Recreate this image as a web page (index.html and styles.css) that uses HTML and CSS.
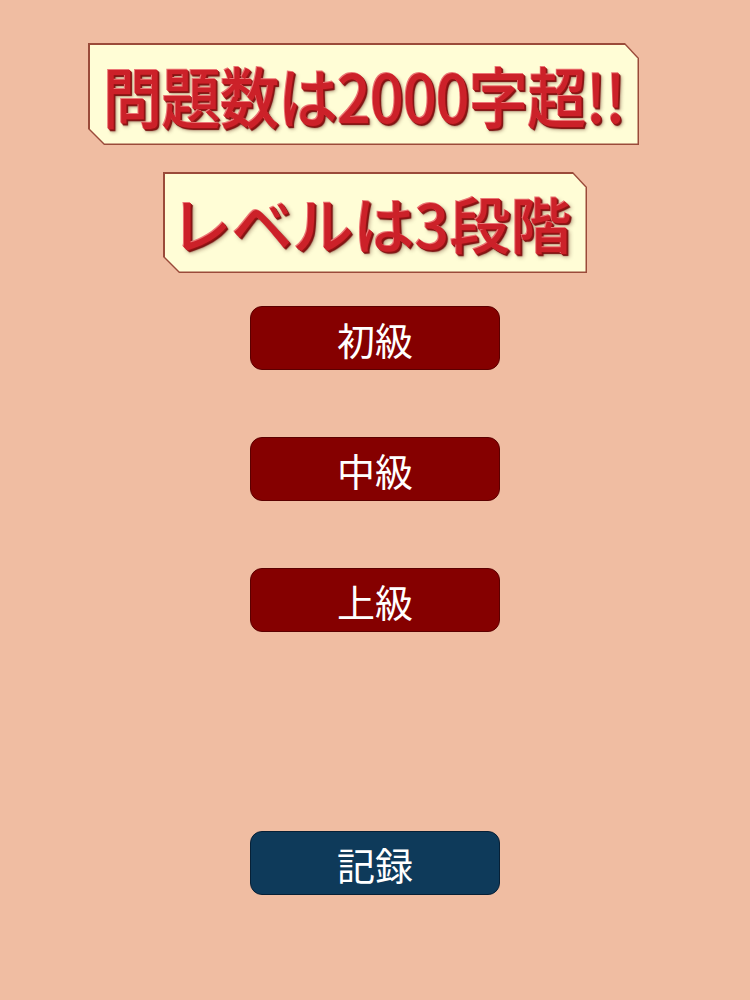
FILE: index.html
```html
<!DOCTYPE html>
<html lang="ja">
<head>
<meta charset="utf-8">
<link rel="stylesheet" href="styles.css">
</head>
<body>
<main class="page">
  <div class="banner banner-wide">
    <div class="banner-inner"><span class="banner-text narrow">問題数は2000字超!!</span></div>
  </div>
  <div class="banner banner-small">
    <div class="banner-inner"><span class="banner-text">レベルは3段階</span></div>
  </div>
  <div class="levels">
    <button class="btn btn-red">初級</button>
    <button class="btn btn-red">中級</button>
    <button class="btn btn-red">上級</button>
  </div>
  <button class="btn btn-blue record">記録</button>
</main>
</body>
</html>
```
FILE: styles.css
```css
html, body {
  margin: 0;
  padding: 0;
  background: #f0bda2;
  height: 100%;
}
.page {
  display: flex;
  flex-direction: column;
  align-items: center;
  padding-top: 43px;
  font-family: "Noto Sans CJK JP", "Noto Sans", sans-serif;
}
.banner {
  background: #9a4b3a;
  padding: 1.5px;
  box-sizing: border-box;
  clip-path: polygon(0 0, calc(100% - 14px) 0, 100% 15px, 100% 100%, 16px 100%, 0 calc(100% - 16px));
}
.banner-inner {
  height: 100%;
  background: #fffdd6;
  display: flex;
  align-items: center;
  justify-content: center;
  clip-path: polygon(0 0, calc(100% - 13px) 0, 100% 14px, 100% 100%, 15px 100%, 0 calc(100% - 15px));
}
.banner-wide {
  width: 551px;
  height: 102px;
  align-self: flex-start;
  margin-left: 88px;
}
.banner-small {
  width: 424px;
  height: 101px;
  margin-top: 27px;
}
.banner-text {
  display: inline-block;
  color: #cc2129;
  font-weight: 500;
  font-size: 61px;
  line-height: 1;
  white-space: nowrap;
  margin-left: -8px;
  text-shadow: -1px -1px 0 #ec7676, 1px 1px 0 #961414, 2px 2px 1px #7a1010, 3px 3px 4px rgba(70, 20, 0, 0.4);
}
.banner-text.narrow {
  font-size: 66px;
  letter-spacing: -1px;
  margin-left: 0;
  transform: scaleX(0.9);
}
.levels {
  display: flex;
  flex-direction: column;
  gap: 67px;
  margin-top: 33px;
}
.btn {
  width: 250px;
  height: 64px;
  border-radius: 12px;
  font-family: "Noto Sans CJK JP", "Noto Sans", sans-serif;
  font-size: 38px;
  color: #ffffff;
  display: flex;
  align-items: center;
  justify-content: center;
  padding: 0;
  cursor: pointer;
}
.btn-red {
  background: #850000;
  border: 1px solid #5c0000;
}
.btn-blue {
  background: #0e3a5a;
  border: 1px solid #072036;
}
.record {
  margin-top: 199px;
}
```
